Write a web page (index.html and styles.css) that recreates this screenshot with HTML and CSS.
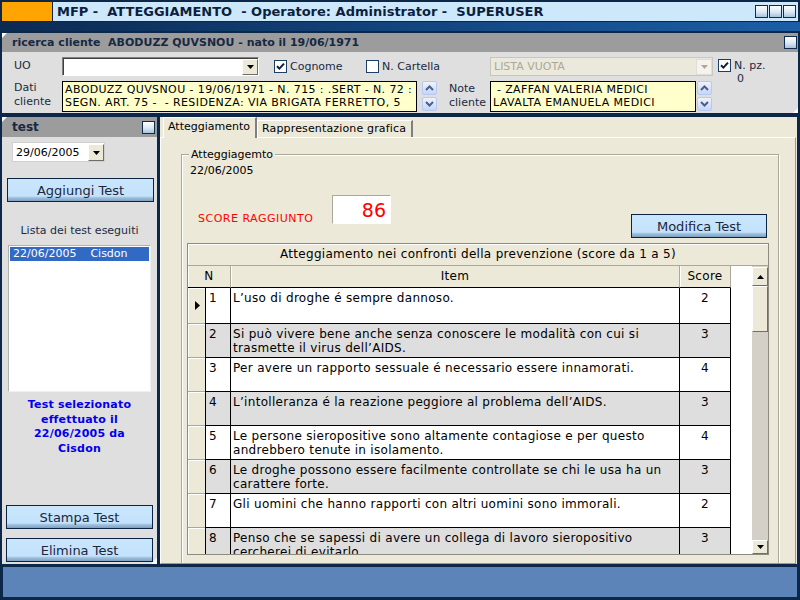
FILE: index.html
```html
<!DOCTYPE html>
<html lang="it">
<head>
<meta charset="utf-8">
<title>MFP - Atteggiamento</title>
<link rel="stylesheet" href="styles.css">
</head>
<body>
<div class="app">
  <header class="titlebar">
    <div class="logo"></div>
    <div class="title">
      <span class="title-text">MFP -&nbsp; ATTEGGIAMENTO&nbsp; - Operatore: Administrator -&nbsp; SUPERUSER</span>
      <div class="winbtns"><span class="wbtn"></span><span class="wbtn"></span><span class="wbtn"></span></div>
    </div>
  </header>
  <div class="stripe"></div>

  <section class="client">
    <div class="phead">
      <span class="phead-text">ricerca cliente&nbsp; ABODUZZ QUVSNOU - nato il 19/06/1971</span>
      <span class="wbtn"></span>
    </div>
    <div class="cbody">
      <div class="crow r1">
        <span class="flabel">UO</span>
        <div class="combo uo">
          <span class="cval"></span>
          <span class="dd"><svg width="7" height="4" viewBox="0 0 7 4"><path d="M0 0h7L3.5 4z"/></svg></span>
        </div>
        <div class="ck cog">
          <span class="chk"><svg width="9" height="9" viewBox="0 0 9 9"><path d="M1 4.2l2.4 2.4L8 1.6" fill="none" stroke="#0e1f3c" stroke-width="2"/></svg></span>
          <span>Cognome</span>
        </div>
        <div class="ck ncart">
          <span class="chk"></span>
          <span>N. Cartella</span>
        </div>
        <div class="combo lista">
          <span class="cval">LISTA VUOTA</span>
          <span class="dd"><svg width="7" height="4" viewBox="0 0 7 4"><path d="M0 0h7L3.5 4z"/></svg></span>
        </div>
        <div class="npz">
          <div class="ck">
            <span class="chk"><svg width="9" height="9" viewBox="0 0 9 9"><path d="M1 4.2l2.4 2.4L8 1.6" fill="none" stroke="#0e1f3c" stroke-width="2"/></svg></span>
            <span>N. pz.</span>
          </div>
          <div class="npz-val">0</div>
        </div>
      </div>
      <div class="crow r2">
        <span class="flabel two">Dati<br>cliente</span>
        <div class="memo dati">ABODUZZ QUVSNOU - 19/06/1971 - N. 715 : .SERT - N. 72 :<br>SEGN. ART. 75 -&nbsp; - RESIDENZA: VIA BRIGATA FERRETTO, 5</div>
        <div class="spin">
          <span class="sbtn"><svg width="9" height="6" viewBox="0 0 9 6"><path d="M1 5l3.5-3.5L8 5" fill="none" stroke="#4a5f8c" stroke-width="2"/></svg></span>
          <span class="sbtn"><svg width="9" height="6" viewBox="0 0 9 6"><path d="M1 1l3.5 3.5L8 1" fill="none" stroke="#4a5f8c" stroke-width="2"/></svg></span>
        </div>
        <span class="flabel two note">Note<br>cliente</span>
        <div class="memo notes">&nbsp;- ZAFFAN VALERIA MEDICI<br>LAVALTA EMANUELA MEDICI</div>
        <div class="spin tight">
          <span class="sbtn"><svg width="9" height="6" viewBox="0 0 9 6"><path d="M1 5l3.5-3.5L8 5" fill="none" stroke="#4a5f8c" stroke-width="2"/></svg></span>
          <span class="sbtn"><svg width="9" height="6" viewBox="0 0 9 6"><path d="M1 1l3.5 3.5L8 1" fill="none" stroke="#4a5f8c" stroke-width="2"/></svg></span>
        </div>
      </div>
    </div>
  </section>

  <div class="main">
    <aside class="left">
      <div class="lhead"><span>test</span><span class="wbtn"></span></div>
      <div class="combo date">
        <span class="cval">29/06/2005</span>
        <span class="dd"><svg width="7" height="4" viewBox="0 0 7 4"><path d="M0 0h7L3.5 4z"/></svg></span>
      </div>
      <button class="btn add">Aggiungi Test</button>
      <div class="lista-label">Lista dei test eseguiti</div>
      <div class="listbox">
        <div class="lrow sel"><span>22/06/2005</span><span class="who">Cisdon</span></div>
      </div>
      <div class="selinfo">Test selezionato<br>effettuato il<br>22/06/2005 da<br>Cisdon</div>
      <button class="btn stampa">Stampa Test</button>
      <button class="btn elimina">Elimina Test</button>
      <span class="grip"></span>
    </aside>

    <section class="content">
      <div class="tabs">
        <span class="tab active">Atteggiamento</span>
        <span class="tab other">Rappresentazione grafica</span>
      </div>
      <div class="panel">
        <div class="group">
          <div class="legend">Atteggiagemto</div>
          <div class="gdate">22/06/2005</div>
          <div class="scorerow">
            <span class="scorelbl">SCORE RAGGIUNTO</span>
            <span class="scorebox">86</span>
            <button class="btn mod">Modifica Test</button>
          </div>
          <div class="grid">
            <div class="gtitle">Atteggiamento nei confronti della prevenzione (score da 1 a 5)</div>
            <div class="gbody">
              <div class="gtable">
                <div class="hrow">
                  <span class="hc c-n2">N</span>
                  <span class="hc c-item">Item</span>
                  <span class="hc c-score">Score</span>
                  <span class="c-blank"></span>
                </div>
                <div class="row odd tall">
                  <span class="c-sel"><svg width="5" height="9" viewBox="0 0 5 9"><path d="M0 0l5 4.5L0 9z"/></svg></span>
                  <span class="c-n">1</span>
                  <span class="c-item">L’uso di droghe é sempre dannoso.</span>
                  <span class="c-score">2</span>
                  <span class="c-blank"></span>
                </div>
                <div class="row even">
                  <span class="c-sel"></span>
                  <span class="c-n">2</span>
                  <span class="c-item">Si può vivere bene anche senza conoscere le modalità con cui si trasmette il virus dell’AIDS.</span>
                  <span class="c-score">3</span>
                  <span class="c-blank"></span>
                </div>
                <div class="row odd">
                  <span class="c-sel"></span>
                  <span class="c-n">3</span>
                  <span class="c-item">Per avere un rapporto sessuale é necessario essere innamorati.</span>
                  <span class="c-score">4</span>
                  <span class="c-blank"></span>
                </div>
                <div class="row even">
                  <span class="c-sel"></span>
                  <span class="c-n">4</span>
                  <span class="c-item">L’intolleranza é la reazione peggiore al problema dell’AIDS.</span>
                  <span class="c-score">3</span>
                  <span class="c-blank"></span>
                </div>
                <div class="row odd">
                  <span class="c-sel"></span>
                  <span class="c-n">5</span>
                  <span class="c-item">Le persone sieropositive sono altamente contagiose e per questo andrebbero tenute in isolamento.</span>
                  <span class="c-score">4</span>
                  <span class="c-blank"></span>
                </div>
                <div class="row even">
                  <span class="c-sel"></span>
                  <span class="c-n">6</span>
                  <span class="c-item">Le droghe possono essere facilmente controllate se chi le usa ha un carattere forte.</span>
                  <span class="c-score">3</span>
                  <span class="c-blank"></span>
                </div>
                <div class="row odd">
                  <span class="c-sel"></span>
                  <span class="c-n">7</span>
                  <span class="c-item">Gli uomini che hanno rapporti con altri uomini sono immorali.</span>
                  <span class="c-score">2</span>
                  <span class="c-blank"></span>
                </div>
                <div class="row even">
                  <span class="c-sel"></span>
                  <span class="c-n">8</span>
                  <span class="c-item">Penso che se sapessi di avere un collega di lavoro sieropositivo cercherei di evitarlo.</span>
                  <span class="c-score">3</span>
                  <span class="c-blank"></span>
                </div>
              </div>
              <div class="vscroll">
                <span class="sb-btn"><svg width="7" height="4" viewBox="0 0 7 4"><path d="M0 4h7L3.5 0z"/></svg></span>
                <span class="sb-thumb"></span>
                <span class="sb-track"></span>
                <span class="sb-btn"><svg width="7" height="4" viewBox="0 0 7 4"><path d="M0 0h7L3.5 4z"/></svg></span>
              </div>
            </div>
          </div>
        </div>
      </div>
    </section>
  </div>

  <footer class="bottom"></footer>
</div>
</body>
</html>
```

FILE: styles.css
```css
* { box-sizing: border-box; margin: 0; padding: 0; }
html, body { width: 800px; height: 600px; overflow: hidden; }
body {
  background: #0c2747;
  font-family: "DejaVu Sans", Verdana, sans-serif;
  font-size: 11px;
  color: #000;
}
.app { width: 800px; height: 600px; display: flex; flex-direction: column; }

/* title bar */
.titlebar { height: 22px; display: flex; gap: 1px; padding: 2px 2px 1px 2px; }
.logo { width: 50px; background: #ffa400; }
.title {
  flex: 1; background: #cde8fb; display: flex; align-items: center;
  padding: 0 2px 0 4px;
}
.title-text { flex: 1; font-weight: bold; font-size: 13px; color: #0c1f3d; white-space: pre; }
.winbtns { display: flex; gap: 1px; }
.wbtn {
  display: block; width: 13px; height: 13px; border: 1px solid #0e2b50;
  background: linear-gradient(#ffffff, #dbe8f4 55%, #a9c2dc);
}
.stripe { height: 9px; background: linear-gradient(90deg, #0b2a52, #13447c 50%, #1b5ea6); }

/* client panel */
.client {
  margin: 2px 2px 0 2px; height: 80px; background: #dfdfdf;
  display: flex; flex-direction: column; position: relative;
}
.client::before, .left::before {
  content: ""; position: absolute; left: 0; top: 0;
  border-top: 5px solid #fff; border-right: 5px solid transparent;
}
.client::after {
  content: ""; position: absolute; right: 0; bottom: 0;
  border-bottom: 5px solid #fff; border-left: 5px solid transparent;
}
.phead {
  height: 19px; background: #9c9c9c; display: flex; align-items: center;
  justify-content: space-between; padding: 0 1px 0 10px;
}
.phead-text { font-weight: bold; font-size: 11px; color: #172844; white-space: pre; }
.cbody { padding: 5px 0 0 12px; }
.crow { display: flex; }
.r1 { height: 19px; align-items: center; }
.r2 { height: 31px; margin-top: 5px; align-items: flex-start; }
.flabel { width: 48px; color: #1b2a44; align-self: flex-start; line-height: 14px; padding-top: 2px; }
.flabel.two { padding-top: 0; line-height: 14px; margin-top: 0; }
.flabel.note { width: 41px; margin-left: 12px; margin-top: 1px; }

.combo {
  display: flex; height: 19px; background: #fff;
  border-top: 1px solid #808080; border-left: 1px solid #808080;
  border-right: 1px solid #fff; border-bottom: 1px solid #fff;
  box-shadow: inset 1px 1px 0 #404040;
}
.combo .cval { flex: 1; padding: 1px 0 0 3px; line-height: 15px; white-space: nowrap; overflow: hidden; }
.combo .dd {
  width: 16px; display: flex; align-items: center; justify-content: center;
  background: #ece9d8; margin: 1px 0 0 0;
  border-top: 1px solid #fff; border-left: 1px solid #fff;
  border-right: 1px solid #716f64; border-bottom: 1px solid #716f64;
}
.combo .dd svg path { fill: #000; }
.combo.uo { width: 197px; }
.combo.lista { width: 223px; background: #ebe9dc; color: #aca899; box-shadow: none; border: 1px solid #c9c7ba; }
.combo.lista .dd { background: #f4f3ee; border: 1px solid #e0ded4; }
.combo.lista .dd svg path { fill: #aca899; }

.ck { display: flex; align-items: center; gap: 3px; color: #1b2a44; }
.ck.cog { width: 92px; margin-left: 15px; }
.ck.ncart { width: 124px; }
.chk {
  width: 13px; height: 13px; background: #fff; border: 1px solid #1c3f66;
  display: flex; align-items: center; justify-content: center;
}
.npz { margin-left: 5px; align-self: flex-start; margin-top: 2px; color: #1b2a44; }
.npz-val { padding-left: 19px; line-height: 13px; margin-top: 0; }

.memo {
  height: 31px; background: #ffffcc; border: 1px solid #000;
  padding: 1px 0 0 2px; line-height: 13px; white-space: nowrap; overflow: hidden; color: #000;
  letter-spacing: 0.4px;
}
.memo.dati { width: 355px; }
.memo.notes { width: 206px; }
.spin { display: flex; flex-direction: column; gap: 2px; margin-left: 5px; }
.spin.tight { margin-left: 1px; }
.sbtn {
  width: 15px; height: 14px; display: flex; align-items: center; justify-content: center;
  border: 1px solid #b7c9ef; border-radius: 2px;
  background: linear-gradient(#eef3fe, #c6d6f7);
}

/* main row */
.main { display: flex; height: 447px; margin-top: 4px; }

/* left panel */
.left {
  width: 155px; margin-left: 2px; background: #dfdfdf;
  display: flex; flex-direction: column; position: relative;
}
.lhead {
  height: 20px; background: #9c9c9c; display: flex; align-items: center;
  justify-content: space-between; padding: 0 2px 0 10px;
  font-weight: bold; font-size: 12px; color: #172844;
}
.combo.date { width: 93px; height: 20px; margin: 5px 0 0 10px; border: 1px solid #d0d0d0; box-shadow: none; }
.combo.date .cval { padding-top: 2px; }
.btn {
  display: flex; align-items: center; justify-content: center;
  font-family: "DejaVu Sans", Verdana, sans-serif; font-size: 13px; color: #1a2740;
  border: 1px solid #0b2444;
  background: linear-gradient(#c9e6fd 0, #c3e2fb 78%, #9fc0de 85%, #7f9fbf 100%);
}
.btn.add { width: 147px; height: 24px; margin: 16px 0 0 5px; }
.lista-label { margin-top: 21px; text-align: center; line-height: 15px; color: #1b2a44; }
.listbox {
  width: 143px; height: 147px; margin: 7px 0 0 6px; background: #fff;
  border-top: 1px solid #b0b0b0; border-left: 1px solid #b0b0b0;
  border-right: 1px solid #f0f0f0; border-bottom: 1px solid #f0f0f0; padding: 1px;
}
.lrow { height: 14px; line-height: 14px; padding-left: 3px; display: flex; }
.lrow.sel { background: #316ac5; color: #fff; }
.lrow .who { margin-left: 14px; }
.selinfo {
  margin-top: 6px; text-align: center; line-height: 14.5px;
  font-weight: bold; font-size: 11px; color: #0000ee; letter-spacing: 0.2px;
}
.btn.stampa { width: 147px; height: 24px; margin: auto 0 0 4px; }
.btn.elimina { width: 147px; height: 24px; margin: 9px 0 2px 4px; }
.grip {
  position: absolute; right: 0; bottom: 0;
  border-bottom: 6px solid #fff; border-left: 6px solid transparent;
}

/* content */
.content {
  width: 637px; margin-left: 3px; background: #ece9d8;
  display: flex; flex-direction: column;
}
.tabs { height: 20px; display: flex; align-items: flex-end; padding-left: 3px; position: relative; z-index: 1; }
.tab {
  height: 17px; padding: 0 0 0 4px; line-height: 15px; color: #000; white-space: nowrap;
  border-top: 1px solid #fff; border-left: 1px solid #fff;
  border-right: 2px solid #808080; background: #ece9d8;
}
.tab.active { height: 21px; width: 94px; line-height: 17px; margin-bottom: -1px; }
.tab.other { width: 156px; letter-spacing: 0.15px; }
.panel {
  flex: 1; min-height: 0; overflow: hidden;
  border-top: 1px solid #fff; border-left: 1px solid #fff;
  border-right: 1px solid #9c9a8e; border-bottom: 1px solid #9c9a8e;
  margin-right: 1px; padding: 16px 16px 0 20px;
}
.group {
  height: 480px; border: 1px solid #aca899;
  box-shadow: inset 1px 1px 0 #fff, 1px 1px 0 #fff;
}
.legend {
  width: fit-content; margin: -7px 0 0 7px; padding: 0 2px;
  background: #ece9d8; line-height: 13px; color: #000;
}
.gdate { margin: 3px 0 0 8px; line-height: 13px; }
.scorerow { display: flex; align-items: flex-start; margin-top: 18px; height: 43px; }
.scorelbl { width: 150px; padding-left: 16px; margin-top: 17px; line-height: 14px; color: #ff0000; letter-spacing: 0.5px; }
.scorebox {
  width: 59px; height: 29px; background: #fff; color: #ff0000;
  font-size: 19px; text-align: right; padding: 3px 4px 0 0; line-height: 22px;
  border-top: 1px solid #aca899; border-left: 1px solid #aca899;
  border-right: 1px solid #fff; border-bottom: 1px solid #fff;
}
.btn.mod { width: 136px; height: 24px; margin: 19px 11px 0 auto; }

.grid {
  width: 582px; height: 312px; margin: 5px 0 0 5px; background: #fff;
  border: 1px solid #8d8b80; display: flex; flex-direction: column; overflow: hidden;
  font-size: 12px; letter-spacing: 0.3px;
}
.gtitle {
  height: 22px; flex: none; background: #ece9d8; text-align: center; line-height: 21px;
  border-bottom: 1px solid #aca899; box-shadow: inset 1px 1px 0 #fff;
}
.gbody { flex: 1; min-height: 0; display: flex; }
.gtable { width: 564px; }
.hrow { display: flex; height: 22px; }
.hc {
  background: #ece9d8; text-align: center; line-height: 21px;
  border-right: 1px solid #aca899; border-bottom: 1px solid #000;
  box-shadow: inset 1px 0 0 #fff;
}
.c-n2 { width: 43px; }
.c-item { width: 449px; }
.c-score { width: 51px; }
.c-blank { width: 21px; background: #fff; }
.row { display: flex; height: 34px; }
.row.tall { height: 36px; }
.row > span { line-height: 14px; padding-top: 3px; border-bottom: 1px solid #000; }
.row .c-sel {
  width: 17px; background: #ece9d8; border-bottom: 1px solid #aca899;
  box-shadow: inset 1px 1px 0 #fff; display: flex; align-items: center; justify-content: center;
  padding: 0 0 0 1px;
}
.row .c-n { width: 26px; border-left: 1px solid #000; border-right: 1px solid #000; padding-left: 3px; }
.row .c-item { border-right: 1px solid #000; padding-left: 2px; padding-right: 2px; }
.row .c-score { border-right: 1px solid #000; text-align: center; }
.row .c-blank { border-bottom: 0; background: #fff; }
.row.odd > .c-n, .row.odd > .c-item, .row.odd > .c-score { background: #fff; }
.row.even > .c-n, .row.even > .c-item, .row.even > .c-score { background: #dedede; }

.vscroll { width: 16px; background: #d4d0c8; display: flex; flex-direction: column; padding-top: 1px; }
.sb-btn, .sb-thumb {
  background: #ece9d8; display: flex; align-items: center; justify-content: center;
  border-top: 1px solid #fff; border-left: 1px solid #fff;
  border-right: 1px solid #716f64; border-bottom: 1px solid #716f64;
}
.sb-btn { height: 19px; }
.sb-thumb { height: 46px; }
.sb-track { flex: 1; }
.sb-btn:last-child { height: 14px; }

/* bottom bar */
.bottom { height: 30px; margin: 3px 3px 0 3px; background: #5c84b9; }
```
